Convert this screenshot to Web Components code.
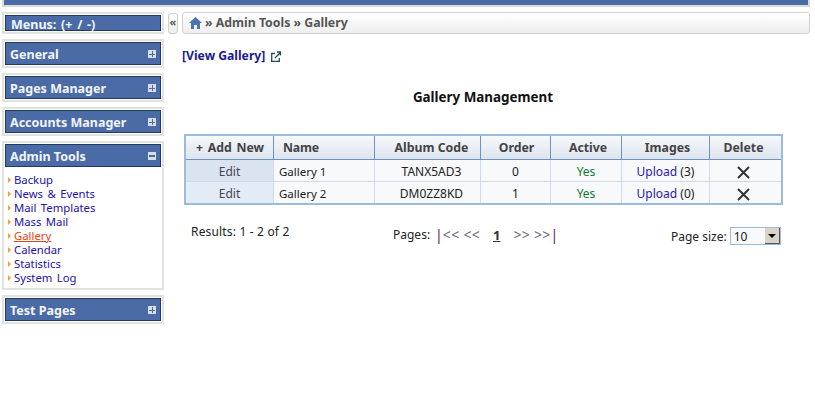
<!DOCTYPE html>
<html><head><meta charset="utf-8"><style>
html,body{margin:0;padding:0;background:#fff;overflow:hidden}
body{width:815px;height:405px;font:12px "Noto Sans","DejaVu Sans",sans-serif;color:#222}
</style></head><body>
<admin-shell>
<side-panel slot="side" head="Menus: (+ / -)" kind="top"></side-panel>
<side-panel slot="side" head="General"></side-panel>
<side-panel slot="side" head="Pages Manager"></side-panel>
<side-panel slot="side" head="Accounts Manager"></side-panel>
<side-panel slot="side" head="Admin Tools" open>
<side-link>Backup</side-link><side-link>News &amp; Events</side-link><side-link>Mail Templates</side-link><side-link>Mass Mail</side-link><side-link active>Gallery</side-link><side-link>Calendar</side-link><side-link>Statistics</side-link><side-link>System Log</side-link>
</side-panel>
<side-panel slot="side" head="Test Pages"></side-panel>
<crumb-bar slot="crumb"></crumb-bar>
<gallery-page slot="main"></gallery-page>
</admin-shell>
<script>
function def(name,css,html){customElements.define(name,class extends HTMLElement{connectedCallback(){if(this.shadowRoot)return;const r=this.attachShadow({mode:'open'});r.innerHTML='<style>'+css+'</style>'+(typeof html==='function'?html(this):html);}});}
def('admin-shell',`:host{display:block}
.top{height:5px;margin:0 5px 0 2px;border:2px solid #d9d9d9;border-top:0;background:#4b6ba6}
.cols{display:flex;margin-top:5px}
.side{width:162px;margin-left:2px;display:flex;flex-direction:column;gap:5px;flex:none}
.tog{width:8px;height:19px;margin:1px 0 0 4px;flex:none;border:1px solid #cfcfcf;border-radius:3px;background:linear-gradient(#fff,#ececec);font:bold 11px/16px "Noto Sans",sans-serif;color:#555;text-align:center}
.right{width:628px;margin-left:4px;flex:none}
`,`<div class="top"></div><div class="cols"><div class="side"><slot name="side"></slot></div><div class="tog">«</div><div class="right"><slot name="crumb"></slot><slot name="main"></slot></div></div>`);
def('side-panel',`:host{display:block;border:2px solid #e2e2e2;padding:1px}
.h{background:#4b6ba6;border:1px solid #233a5c;height:21px;display:flex;align-items:center;justify-content:space-between;padding:0 4px 0 4px;color:#f2f5fa;font:bold 12.5px "Noto Sans",sans-serif}
.h .t{padding-top:2px}
:host([kind=top]) .h{height:14px;padding-left:5px;word-spacing:1.5px}
.i{width:8px;height:8px;background:#d9dde5;display:block;position:relative}
.i:before{content:"";position:absolute;left:1px;right:1px;top:3px;height:2px;background:#4b6ba6}
.i.p:before{height:1px;top:4px}
.i.p:after{content:"";position:absolute;top:1px;bottom:1px;left:4px;width:1px;background:#4b6ba6}
.b{padding:6px 0 2px 3px;display:block}
`,t=>{const top=t.getAttribute('kind')==='top',open=t.hasAttribute('open');return `<div class="h"><span class="t">${t.getAttribute('head')}</span>${top?'':`<span class="i ${open?'':'p'}"></span>`}</div>${open?'<div class="b"><slot></slot></div>':''}`});
def('side-link',`:host{display:block;height:14px;font:11.3px/14px "Noto Sans",sans-serif;color:#2211aa;padding-left:6px;position:relative;word-spacing:1.5px}
:host:before{content:"";position:absolute;left:0;top:4px;border-left:3px solid #f5a030;border-top:3px solid transparent;border-bottom:3px solid transparent}
:host([active]){color:#f04018}
:host([active]) span{text-decoration:underline}
`,`<span><slot></slot></span>`);
def('crumb-bar',`:host{display:flex;align-items:center;gap:3px;height:20px;border:1px solid #d2d2d2;border-radius:3px;background:linear-gradient(#fff,#eee);padding-left:6px;font:bold 12.3px "Noto Sans",sans-serif;color:#555}
span{padding-bottom:2px}
svg{display:block}`,`<svg width="13" height="12" viewBox="0 0 13 12"><path d="M6.5 0 13 6h-2v6H8V8H5v4H2V6H0z" fill="#4a74b4"/></svg><span>» Admin Tools » Gallery</span>`);
def('gallery-page',`:host{display:block;font:12px "Noto Sans",sans-serif}
.v{margin:14px 0 0 0;height:16px;font:bold 12.2px/16px "Noto Sans",sans-serif;color:#1a1a90;display:flex;align-items:center;gap:6px}
h1{font:bold 13.4px/18px "Noto Sans",sans-serif;color:#111;text-align:center;margin:24px 0 0;width:602px}
table{border-collapse:separate;border-spacing:0;border:2px solid #9bbbdc;width:599px;margin:28px 0 0 2px;table-layout:fixed;box-sizing:border-box}
th{height:23px;padding:0;font:bold 12.3px "Noto Sans",sans-serif;color:#444;background:linear-gradient(#f6f8fb,#dde4ee);border-right:1px solid #6d93ba;border-bottom:1px solid #6d93ba}
th.a{word-spacing:1.5px;padding-left:1px}th.c{padding-left:8px}th.o{padding-left:2px}th.m{padding-left:4px}th.d{padding-right:4px}
td{height:20px;padding:1px 0 0;text-align:center;background:#f7f9fb;color:#222;border-right:1px solid #d0dbe9;border-bottom:1px solid #d0dbe9}
td.c{padding-left:8px}
tr:last-child td{border-bottom:0}th:last-child,td:last-child{border-right:0}
td:first-child{color:#445;background:#dae4f1}tr:last-child td:first-child{background:#e3ebf6}
td.n{text-align:left;padding-left:5px;font-size:11.5px}th.n{text-align:left;padding-left:9px;letter-spacing:-.2px}
.y{color:#0f7a2c}.u{color:#2a1ab0}
.f{display:flex;align-items:flex-start;width:599px;margin-left:2px;height:50px}
.r{margin:19px 0 0 7px;width:202px;line-height:16px;letter-spacing:.17px}
.p{margin:22px 0 0 0;width:278px;line-height:16px;display:flex;align-items:center}
.p .ar2{color:#667;font-size:14px;letter-spacing:.3px}
.p i{font-style:normal;color:#602060;font-size:14px}
.p b{text-decoration:underline;font-size:13px;color:#333}
.s{margin:22px 0 0 0;display:flex;align-items:center;gap:3px;height:18px}
.sel{width:51px;height:18px;border:1px solid #9bbbdc;background:#f7f9fb;display:flex;justify-content:space-between;align-items:center;padding-left:3px;box-sizing:border-box}
.ar{width:15px;height:16px;background:#d8d4c8;border-right:1px solid #555;border-bottom:1px solid #555;box-sizing:border-box;display:flex;align-items:center;justify-content:center}
.ar:after{content:"";border-top:4px solid #000;border-left:4px solid transparent;border-right:4px solid transparent}
`,`<div class="v"><span>[View Gallery]</span><svg width="10" height="11" viewBox="0 0 10 11" fill="none" stroke="#204a5c" stroke-width="1.3"><path d="M4 2.5H.7v7.8h7.6V7M4 7l5-5M6 1h3.4v3.4"/></svg></div>
<h1>Gallery Management</h1>
<table><colgroup><col style="width:88px"><col style="width:101px"><col style="width:106px"><col style="width:70px"><col style="width:71px"><col style="width:88px"><col></colgroup>
<tr><th class="a">+ Add New</th><th class="n">Name</th><th class="c">Album Code</th><th class="o">Order</th><th class="m">Active</th><th class="m">Images</th><th class="d">Delete</th></tr>
<tr><td>Edit</td><td class="n">Gallery 1</td><td class="c">TANX5AD3</td><td>0</td><td class="y">Yes</td><td><span class="u">Upload</span> (3)</td><td><x-icon></x-icon></td></tr>
<tr><td>Edit</td><td class="n">Gallery 2</td><td class="c">DM0ZZ8KD</td><td>1</td><td class="y">Yes</td><td><span class="u">Upload</span> (0)</td><td><x-icon></x-icon></td></tr></table>
<div class="f"><div class="r">Results: 1 - 2 of 2</div><div class="p"><span>Pages:</span><i style="margin-left:5px">|</i><span class="ar2">&lt;&lt; &lt;&lt;</span><b style="margin:0 13px">1</b><span class="ar2">&gt;&gt; &gt;&gt;</span><i>|</i></div><div class="s">Page size: <div class="sel">10<span class="ar"></span></div></div></div>`);
def('x-icon',`:host{display:inline-block;vertical-align:middle;margin-right:4px}svg{display:block}`,`<svg width="13" height="13" viewBox="0 0 13 13"><path d="M1 1l11 11M12 1 1 12" stroke="#333" stroke-width="2"/></svg>`);
</script></body></html>
